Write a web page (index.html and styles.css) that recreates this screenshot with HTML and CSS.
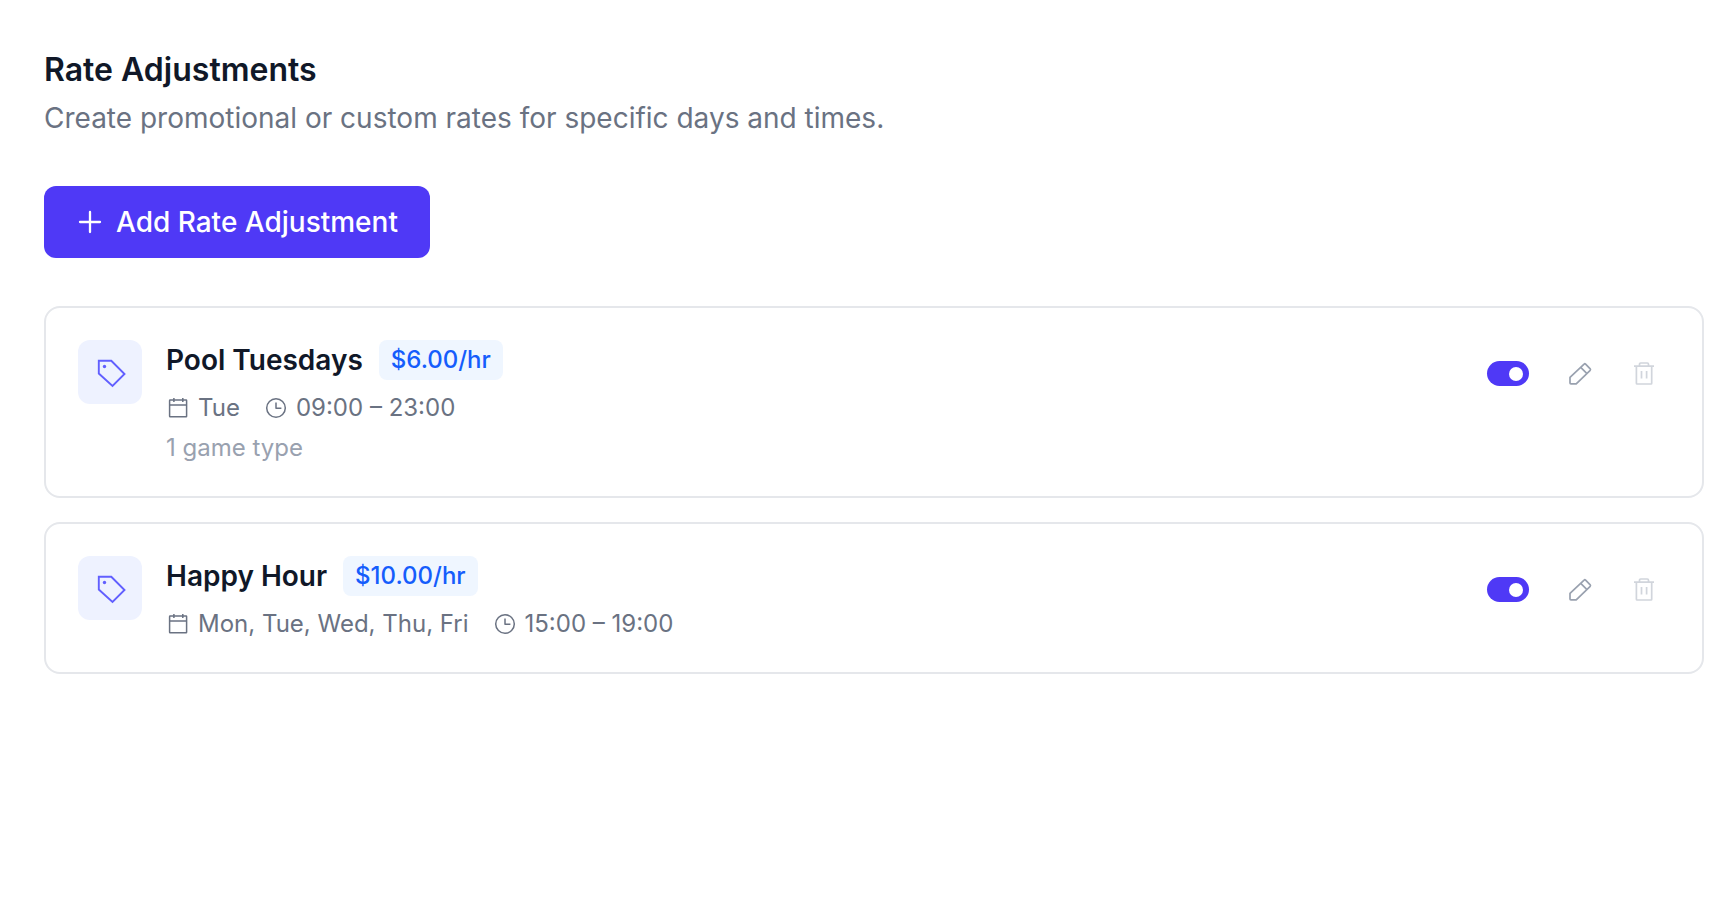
FILE: index.html
```html
<!DOCTYPE html>
<html lang="en">
<head>
    <meta charset="UTF-8">
    <meta name="viewport" content="width=device-width, initial-scale=1.0">
    <title>Rate Adjustments</title>
    <link rel="stylesheet" href="styles.css">
</head>

<body>
    <!-- shared icons -->
    <svg class="sprite" aria-hidden="true">
        <symbol id="icon-tag" viewBox="0 0 32 32">
            <path d="M4.8 4.8H17.3L30.5 18L18.5 30L4.8 17.5Z"/>
            <circle class="dot" cx="10.5" cy="10.5" r="1.7"/>
        </symbol>
        <symbol id="icon-calendar" viewBox="0 0 24 24">
            <rect x="3.6" y="4" width="17" height="16.8" rx="0.5"/>
            <path d="M3.6 8.9H20.6M7.9 2V6M16.8 2V6"/>
        </symbol>
        <symbol id="icon-clock" viewBox="0 0 24 24">
            <circle cx="12" cy="12" r="9.3"/>
            <path d="M12 6.5V12.3H17.4"/>
        </symbol>
        <symbol id="icon-pencil" viewBox="0 0 24 24">
            <path d="M2 15.4V21Q2 21.9 2.9 21.9H8.2L22.2 8.3Q22.8 7.6 22.2 6.9L17.6 2.1Q16.8 1.4 16.1 2.1Z"/>
            <path d="M12.7 5.4L18.7 11.3"/>
        </symbol>
        <symbol id="icon-trash" viewBox="0 0 24 24">
            <path d="M2 4.2H22M4.4 4.2V21.3Q4.4 22 5.1 22H19Q19.7 22 19.7 21.3V4.2"/>
            <path d="M7.5 4.2V2.2Q7.5 1 8.7 1H15.3Q16.5 1 16.5 2.2V4.2"/>
            <path d="M9.5 9V16.5M14.6 9V16.5"/>
        </symbol>
    </svg>

    <div class="container">
        <h1>Rate Adjustments</h1>
        <p class="subtitle">Create promotional or custom rates for specific days and times.</p>

        <button type="button" class="add-btn">
            <svg class="icon-plus" viewBox="0 0 24 24"><path d="M12 2V22M2 12H22"/></svg>
            Add Rate Adjustment
        </button>

        <div class="rate-list">
            <div class="rate-card">
                <div class="rate-icon"><svg><use href="#icon-tag"/></svg></div>
                <div class="rate-info">
                    <div class="rate-title">
                        <h2>Pool Tuesdays</h2>
                        <span class="badge">$6.00/hr</span>
                    </div>
                    <div class="rate-meta">
                        <span class="meta-item"><svg><use href="#icon-calendar"/></svg>Tue</span>
                        <span class="meta-item"><svg><use href="#icon-clock"/></svg>09:00 – 23:00</span>
                    </div>
                    <div class="rate-note">1 game type</div>
                </div>
                <div class="actions">
                    <button type="button" class="toggle" role="switch" aria-checked="true"><span></span></button>
                    <button type="button" class="icon-btn edit"><svg><use href="#icon-pencil"/></svg></button>
                    <button type="button" class="icon-btn delete"><svg><use href="#icon-trash"/></svg></button>
                </div>
            </div>

            <div class="rate-card">
                <div class="rate-icon"><svg><use href="#icon-tag"/></svg></div>
                <div class="rate-info">
                    <div class="rate-title">
                        <h2>Happy Hour</h2>
                        <span class="badge">$10.00/hr</span>
                    </div>
                    <div class="rate-meta">
                        <span class="meta-item"><svg><use href="#icon-calendar"/></svg>Mon, Tue, Wed, Thu, Fri</span>
                        <span class="meta-item"><svg><use href="#icon-clock"/></svg>15:00 – 19:00</span>
                    </div>
                </div>
                <div class="actions">
                    <button type="button" class="toggle" role="switch" aria-checked="true"><span></span></button>
                    <button type="button" class="icon-btn edit"><svg><use href="#icon-pencil"/></svg></button>
                    <button type="button" class="icon-btn delete"><svg><use href="#icon-trash"/></svg></button>
                </div>
            </div>
        </div>
    </div>
</body>
</html>
```

FILE: styles.css
```css
* {
    box-sizing: border-box;
}

body {
    margin: 0;
    font-family: Inter, sans-serif;
    background-color: #fff;
    color: #101828;
}

button {
    border: none;
    padding: 0;
    background: none;
    font-family: inherit;
    cursor: pointer;
}

svg {
    display: block;
    fill: none;
    stroke: currentColor;
    stroke-linejoin: round;
}

.sprite {
    display: none;
}

.container {
    padding: 48px 32px 44px 44px;
}

h1 {
    margin: 0 0 6px;
    font-size: 32px;
    font-weight: 600;
    line-height: 44px;
}

.subtitle {
    margin: 0 0 48px;
    font-size: 28px;
    line-height: 40px;
    color: #6a7282;
}

.add-btn {
    display: flex;
    align-items: center;
    gap: 14px;
    height: 72px;
    padding: 0 32px 0 34px;
    margin-bottom: 48px;
    border-radius: 12px;
    background-color: #4f39f6;
    color: #fff;
    font-size: 28px;
    font-weight: 500;
}

.icon-plus {
    width: 24px;
    height: 24px;
    stroke-width: 2.3;
    stroke-linecap: round;
}

.rate-list {
    display: flex;
    flex-direction: column;
    gap: 24px;
}

.rate-card {
    display: flex;
    align-items: flex-start;
    gap: 24px;
    padding: 32px;
    border: 2px solid #e5e7eb;
    border-radius: 16px;
}

.rate-icon {
    display: flex;
    align-items: center;
    justify-content: center;
    width: 64px;
    height: 64px;
    border-radius: 12px;
    background-color: #eef2ff;
    color: #615fff;
}

.rate-icon svg {
    width: 32px;
    height: 32px;
    stroke-width: 1.9;
    stroke-linejoin: miter;
}

.dot {
    fill: currentColor;
    stroke: none;
}

.rate-info {
    flex: 1;
}

.rate-title {
    display: flex;
    align-items: center;
    gap: 16px;
}

.rate-title h2 {
    margin: 0;
    font-size: 28px;
    font-weight: 600;
    line-height: 40px;
}

.badge {
    padding: 4px 12px;
    border-radius: 8px;
    background-color: #eff6ff;
    color: #155dfc;
    font-size: 24px;
    font-weight: 500;
    line-height: 32px;
}

.rate-meta {
    display: flex;
    gap: 24px;
    margin-top: 12px;
    color: #6a7282;
}

.meta-item {
    display: flex;
    align-items: center;
    gap: 8px;
    font-size: 24px;
    line-height: 32px;
}

.meta-item svg {
    width: 24px;
    height: 24px;
    stroke-width: 1.5;
}

.rate-note {
    margin-top: 8px;
    font-size: 24px;
    line-height: 32px;
    color: #99a1af;
}

.actions {
    display: flex;
    align-items: center;
    gap: 12px;
    height: 67px;
}

.toggle {
    display: flex;
    align-items: center;
    justify-content: flex-end;
    width: 42px;
    height: 25px;
    padding-right: 6px;
    margin-right: 13px;
    border-radius: 13px;
    background-color: #4f39f6;
}

.toggle span {
    width: 14px;
    height: 14px;
    border-radius: 50%;
    background-color: #fff;
}

.icon-btn {
    display: flex;
    align-items: center;
    justify-content: center;
    width: 52px;
    height: 53px;
}

.icon-btn svg {
    width: 24px;
    height: 24px;
    stroke-width: 1.7;
}

.edit {
    color: #99a1af;
}

.delete {
    color: #d1d5dc;
}
```
